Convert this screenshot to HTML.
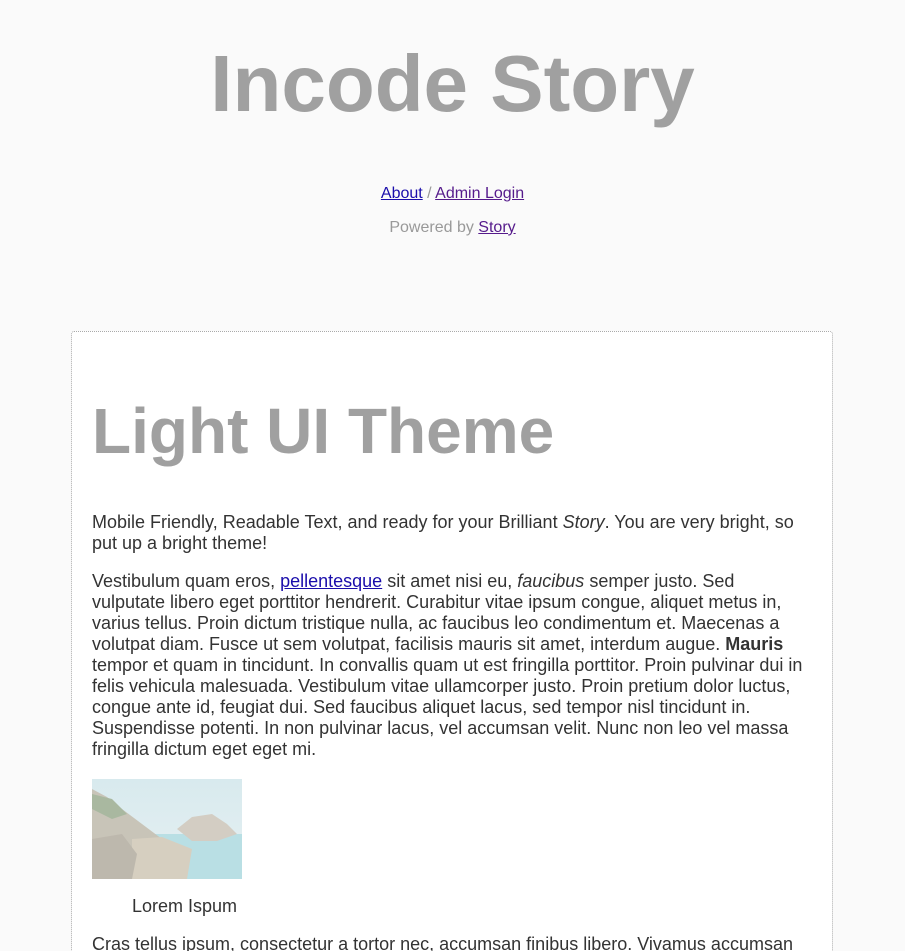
<!DOCTYPE html>
<html><head><meta charset="utf-8"><style>
html,body{margin:0;padding:0;background:#fafafa;overflow:hidden;}
body{font-family:"Liberation Sans",Arial,sans-serif;width:905px;height:951px;overflow:hidden;position:relative;}
h1.site{position:absolute;top:38px;left:0;width:905px;text-align:center;margin:0;font-size:80px;font-weight:bold;color:#a0a0a0;line-height:92px;}
.nav{position:absolute;top:184px;left:0;width:905px;text-align:center;font-size:16px;color:#999;line-height:20px;}
.pow{position:absolute;top:218px;left:0;width:905px;text-align:center;font-size:16px;color:#999;line-height:20px;}
a{color:#1a0dab;}
a.v{color:#551a8b;}
.card{position:absolute;left:71px;top:331px;width:760px;height:700px;background:#fff;border:1px dotted #aaa;border-radius:3px;}
.card h2{position:absolute;left:20px;top:64px;margin:0;font-size:64px;font-weight:bold;color:#a0a0a0;line-height:70px;}
.t{position:absolute;left:20px;width:720px;font-size:18px;line-height:21px;color:#333;margin:0;}
.t a{color:#1a0dab;}
.cap{position:absolute;left:60px;top:564px;font-size:18px;color:#333;line-height:21px;}
</style></head><body>
<h1 class="site">Incode Story</h1>
<div class="nav"><a href="#">About</a> / <a class="v" href="#">Admin Login</a></div>
<div class="pow">Powered by <a class="v" href="#">Story</a></div>
<div class="card">
<h2>Light UI Theme</h2>
<p class="t" style="top:180px">Mobile Friendly, Readable Text, and ready for your Brilliant <i>Story</i>. You are very bright, so put up a bright theme!</p>
<p class="t" style="top:239px">Vestibulum quam eros, <a href="#">pellentesque</a> sit amet nisi eu, <i>faucibus</i> semper justo. Sed vulputate libero eget porttitor hendrerit. Curabitur vitae ipsum congue, aliquet metus in, varius tellus. Proin dictum tristique nulla, ac faucibus leo condimentum et. Maecenas a volutpat diam. Fusce ut sem volutpat, facilisis mauris sit amet, interdum augue. <b>Mauris</b> tempor et quam in tincidunt. In convallis quam ut est fringilla porttitor. Proin pulvinar dui in felis vehicula malesuada. Vestibulum vitae ullamcorper justo. Proin pretium dolor luctus, congue ante id, feugiat dui. Sed faucibus aliquet lacus, sed tempor nisl tincidunt in. Suspendisse potenti. In non pulvinar lacus, vel accumsan velit. Nunc non leo vel massa fringilla dictum eget eget mi.</p>
<svg style="position:absolute;left:20px;top:447px" width="150" height="100" viewBox="0 0 150 100">
<defs><linearGradient id="s" x1="0" y1="0" x2="0" y2="1"><stop offset="0" stop-color="#d8eaee"/><stop offset="1" stop-color="#e6f0f2"/></linearGradient></defs>
<rect width="150" height="100" fill="url(#s)"/>
<rect y="55" width="150" height="45" fill="#b9dfe4"/>
<path d="M0 10 L15 18 L30 30 L50 45 L70 60 L90 70 L80 100 L0 100Z" fill="#c8c4b8"/>
<path d="M0 15 L20 20 L35 35 L20 40 L0 30Z" fill="#a9b8a0"/>
<path d="M85 50 L100 38 L120 35 L135 45 L145 55 L125 62 L100 62Z" fill="#d3cdc3"/>
<path d="M40 60 L70 58 L100 70 L95 100 L40 100Z" fill="#d6cfc0"/>
<path d="M0 60 L30 55 L45 75 L40 100 L0 100Z" fill="#bdb8ad"/>
</svg>
<div class="cap">Lorem Ispum</div>
<p class="t" style="top:602px">Cras tellus ipsum, consectetur a tortor nec, accumsan finibus libero. Vivamus accumsan lorem ipsum dolor sit amet.</p>
</div>
</body></html>
